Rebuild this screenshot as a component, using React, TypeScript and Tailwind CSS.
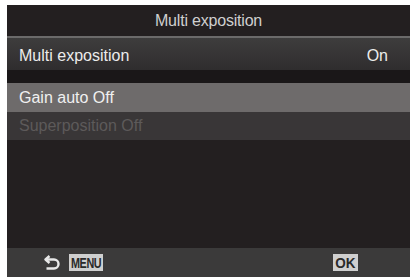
export default function App() {
  return (
    <div className="h-[279px] w-[415px] bg-white pl-[7px] pr-[5px] pt-[5px] pb-[2px] font-['Liberation_Sans',Arial,sans-serif]">
      <div className="flex h-full flex-col bg-[#231f20]">
        {/* title */}
        <div className="flex h-[31px] items-center justify-center pt-[1px] text-[16px] tracking-[-0.2px] text-[#cfcfcf]">
          Multi exposition
        </div>
        <div className="h-[2px] bg-[#6b6a6a]" />
        <div className="flex h-[32px] items-center justify-between bg-gradient-to-b from-[#3e3d3d] to-[#2f2d2e] pl-[12px] pr-[22px] pt-[3px] text-[16px] text-[#ececec]">
          <span>Multi exposition</span>
          <span>On</span>
        </div>
        <div className="h-[13px] bg-[#1a1718]" />
        <div className="flex h-[29px] items-center bg-[#6e6b6b] pl-[12px] text-[16px] text-[#f0f0f0]">
          Gain auto Off
        </div>
        <div className="flex h-[28px] items-center bg-[#393637] pl-[12px] text-[16px] text-[#5d5a5a]">
          Superposition Off
        </div>
        <div className="flex-1" />
        {/* bottom bar */}
        <div className="flex h-[29px] items-center bg-[#3b3a3a] pl-[37px] pr-[52px]">
          <svg width="17" height="15" viewBox="0 0 17 15" className="mr-[8px]">
            <path d="M5.5 1 L1.5 4.5 L5.5 8" fill="none" stroke="#e8e8e8" strokeWidth="2.4" strokeLinejoin="round" />
            <path d="M2 4.5 H10 a4.5 4.5 0 0 1 0 9 H2.5" fill="none" stroke="#e8e8e8" strokeWidth="2.4" />
          </svg>
          <span className="flex h-[17px] w-[34px] items-center justify-center overflow-hidden bg-[#cfcfcf] text-[15px] font-bold leading-none text-[#2a2a2a]">
            <span className="inline-block scale-x-[0.72] tracking-[-0.5px]">MENU</span>
          </span>
          <div className="flex-1" />
          <span className="flex h-[17px] w-[25px] items-center justify-center bg-[#cfcfcf] text-[15px] font-bold leading-none text-[#2a2a2a]">
            <span className="inline-block scale-x-[0.9]">OK</span>
          </span>
        </div>
      </div>
    </div>
  )
}
